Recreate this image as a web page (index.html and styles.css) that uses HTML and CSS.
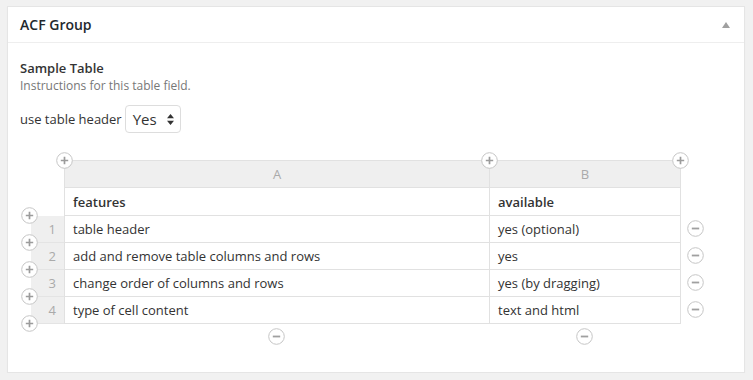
FILE: index.html
```html
<!DOCTYPE html>
<html lang="en">
<head>
<meta charset="utf-8">
<title>ACF Group</title>
<link rel="stylesheet" href="styles.css">
</head>
<body>
<div class="postbox">
  <div class="postbox-header">
    <h2 class="hndle">ACF Group</h2>
    <span class="toggle"><svg width="8" height="6" viewBox="0 0 8 6"><path d="M4 0 L8 6 L0 6 Z" fill="#a0a0a0"/></svg></span>
  </div>
  <div class="inside">
    <div class="field-label">Sample Table</div>
    <div class="field-desc">Instructions for this table field.</div>
    <div class="header-option">
      <span>use table header</span>
      <div class="select"><span>Yes</span><svg class="select-arrows" width="7" height="11" viewBox="0 0 7 11"><path d="M3.5 0 L7 4.3 L0 4.3 Z M3.5 11 L7 6.7 L0 6.7 Z" fill="#333"/></svg></div>
    </div>

    <div class="table-wrap">
      <div class="grid">
        <div class="blank"></div>
        <div class="cell letter col-a top">A</div>
        <div class="cell letter top">B</div>
        <div class="blank"></div>

        <div class="blank"></div>
        <div class="cell head col-a">features</div>
        <div class="cell head">available</div>
        <div class="blank"></div>

        <div class="num">1</div>
        <div class="cell col-a">table header</div>
        <div class="cell">yes (optional)</div>
        <div class="side"><svg class="btn" width="17" height="17" viewBox="0 0 17 17"><circle cx="8.5" cy="8.5" r="7.8" fill="#fff" stroke="#c6c6c6"/><path d="M4.8 8.5h7.4" stroke="#a0a0a0" stroke-width="1.8"/></svg></div>

        <div class="num">2</div>
        <div class="cell col-a">add and remove table columns and rows</div>
        <div class="cell">yes</div>
        <div class="side"><svg class="btn" width="17" height="17" viewBox="0 0 17 17"><circle cx="8.5" cy="8.5" r="7.8" fill="#fff" stroke="#c6c6c6"/><path d="M4.8 8.5h7.4" stroke="#a0a0a0" stroke-width="1.8"/></svg></div>

        <div class="num">3</div>
        <div class="cell col-a">change order of columns and rows</div>
        <div class="cell">yes (by dragging)</div>
        <div class="side"><svg class="btn" width="17" height="17" viewBox="0 0 17 17"><circle cx="8.5" cy="8.5" r="7.8" fill="#fff" stroke="#c6c6c6"/><path d="M4.8 8.5h7.4" stroke="#a0a0a0" stroke-width="1.8"/></svg></div>

        <div class="num">4</div>
        <div class="cell col-a">type of cell content</div>
        <div class="cell">text and html</div>
        <div class="side"><svg class="btn" width="17" height="17" viewBox="0 0 17 17"><circle cx="8.5" cy="8.5" r="7.8" fill="#fff" stroke="#c6c6c6"/><path d="M4.8 8.5h7.4" stroke="#a0a0a0" stroke-width="1.8"/></svg></div>

        <div class="blank"></div>
        <div class="bottom"><svg class="btn" width="17" height="17" viewBox="0 0 17 17"><circle cx="8.5" cy="8.5" r="7.8" fill="#fff" stroke="#c6c6c6"/><path d="M4.8 8.5h7.4" stroke="#a0a0a0" stroke-width="1.8"/></svg></div>
        <div class="bottom"><svg class="btn" width="17" height="17" viewBox="0 0 17 17"><circle cx="8.5" cy="8.5" r="7.8" fill="#fff" stroke="#c6c6c6"/><path d="M4.8 8.5h7.4" stroke="#a0a0a0" stroke-width="1.8"/></svg></div>
        <div class="blank"></div>
      </div>

      <svg class="add col-add-1" width="17" height="17" viewBox="0 0 17 17"><circle cx="8.5" cy="8.5" r="7.8" fill="#fff" stroke="#c6c6c6"/><path d="M4.8 8.5h7.4M8.5 4.8v7.4" stroke="#9c9c9c" stroke-width="1.7"/></svg>
      <svg class="add col-add-2" width="17" height="17" viewBox="0 0 17 17"><circle cx="8.5" cy="8.5" r="7.8" fill="#fff" stroke="#c6c6c6"/><path d="M4.8 8.5h7.4M8.5 4.8v7.4" stroke="#9c9c9c" stroke-width="1.7"/></svg>
      <svg class="add col-add-3" width="17" height="17" viewBox="0 0 17 17"><circle cx="8.5" cy="8.5" r="7.8" fill="#fff" stroke="#c6c6c6"/><path d="M4.8 8.5h7.4M8.5 4.8v7.4" stroke="#9c9c9c" stroke-width="1.7"/></svg>

      <svg class="add row-add-1" width="17" height="17" viewBox="0 0 17 17"><circle cx="8.5" cy="8.5" r="7.8" fill="#fff" stroke="#c6c6c6"/><path d="M4.8 8.5h7.4M8.5 4.8v7.4" stroke="#9c9c9c" stroke-width="1.7"/></svg>
      <svg class="add row-add-2" width="17" height="17" viewBox="0 0 17 17"><circle cx="8.5" cy="8.5" r="7.8" fill="#fff" stroke="#c6c6c6"/><path d="M4.8 8.5h7.4M8.5 4.8v7.4" stroke="#9c9c9c" stroke-width="1.7"/></svg>
      <svg class="add row-add-3" width="17" height="17" viewBox="0 0 17 17"><circle cx="8.5" cy="8.5" r="7.8" fill="#fff" stroke="#c6c6c6"/><path d="M4.8 8.5h7.4M8.5 4.8v7.4" stroke="#9c9c9c" stroke-width="1.7"/></svg>
      <svg class="add row-add-4" width="17" height="17" viewBox="0 0 17 17"><circle cx="8.5" cy="8.5" r="7.8" fill="#fff" stroke="#c6c6c6"/><path d="M4.8 8.5h7.4M8.5 4.8v7.4" stroke="#9c9c9c" stroke-width="1.7"/></svg>
      <svg class="add row-add-5" width="17" height="17" viewBox="0 0 17 17"><circle cx="8.5" cy="8.5" r="7.8" fill="#fff" stroke="#c6c6c6"/><path d="M4.8 8.5h7.4M8.5 4.8v7.4" stroke="#9c9c9c" stroke-width="1.7"/></svg>
    </div>
  </div>
</div>
</body>
</html>
```

FILE: styles.css
```css
html, body {
  margin: 0;
  padding: 0;
}

body {
  background: #f1f1f1;
  font-family: "Open Sans", "Liberation Sans", sans-serif;
  font-size: 13px;
  color: #444;
}

.postbox {
  margin: 6px 0 0 7px;
  width: 738px;
  box-sizing: border-box;
  background: #fff;
  border: 1px solid #e5e5e5;
  box-shadow: 0 1px 1px rgba(0, 0, 0, 0.04);
}

.postbox-header {
  display: flex;
  align-items: center;
  justify-content: space-between;
  padding: 8px 14px 8px 12px;
  border-bottom: 1px solid #eeeeee;
}

.hndle {
  margin: 0;
  font-size: 14px;
  line-height: 19px;
  font-weight: 600;
  color: #23282d;
}

.toggle {
  display: flex;
  margin-top: 1px;
}

.inside {
  padding: 16px 12px 26px 12px;
}

.field-label {
  font-weight: 600;
  line-height: 18px;
  color: #333;
}

.field-desc {
  font-size: 12px;
  line-height: 18px;
  color: #777;
}

.header-option {
  display: flex;
  align-items: center;
  gap: 3px;
  margin-top: 10px;
  line-height: 18px;
  color: #333;
}

.select {
  display: flex;
  align-items: center;
  box-sizing: border-box;
  width: 56px;
  height: 28px;
  padding: 0 6px 0 7px;
  border: 1px solid #ddd;
  border-radius: 4px;
  font-size: 15px;
  color: #333;
}

.select-arrows {
  margin-left: auto;
}

.table-wrap {
  position: relative;
  width: 680px;
  margin: 27px 0 0 11px;
}

.grid {
  display: grid;
  grid-template-columns: 33px 426px 191px 30px;
  grid-template-rows: 28px 28px 27px 27px 27px 27px 22px;
}

.cell {
  display: flex;
  align-items: center;
  box-sizing: border-box;
  padding: 0 8px;
  border-right: 1px solid #e1e1e1;
  border-bottom: 1px solid #e1e1e1;
  color: #333;
  white-space: nowrap;
}

.col-a {
  border-left: 1px solid #e1e1e1;
}

.top {
  border-top: 1px solid #e1e1e1;
}

.letter {
  justify-content: center;
  background: #efefef;
  color: #aaa;
}

.head {
  font-weight: 600;
}

.num {
  display: flex;
  align-items: center;
  justify-content: flex-end;
  box-sizing: border-box;
  padding-right: 8px;
  background: #efefef;
  border-bottom: 1px solid #e4e4e4;
  color: #aaa;
}

.side {
  display: flex;
  align-items: center;
  padding-left: 6px;
  padding-bottom: 3px;
}

.bottom {
  display: flex;
  justify-content: center;
  align-items: flex-start;
  padding-top: 4px;
  padding-right: 2px;
}

.btn,
.add {
  display: block;
}

.add {
  position: absolute;
}

.col-add-1 { top: -8px; left: 25px; }
.col-add-2 { top: -8px; left: 450px; }
.col-add-3 { top: -8px; left: 641px; }

.row-add-1 { left: -10px; top: 47px; }
.row-add-2 { left: -10px; top: 74px; }
.row-add-3 { left: -10px; top: 101px; }
.row-add-4 { left: -10px; top: 128px; }
.row-add-5 { left: -10px; top: 155px; }
```
